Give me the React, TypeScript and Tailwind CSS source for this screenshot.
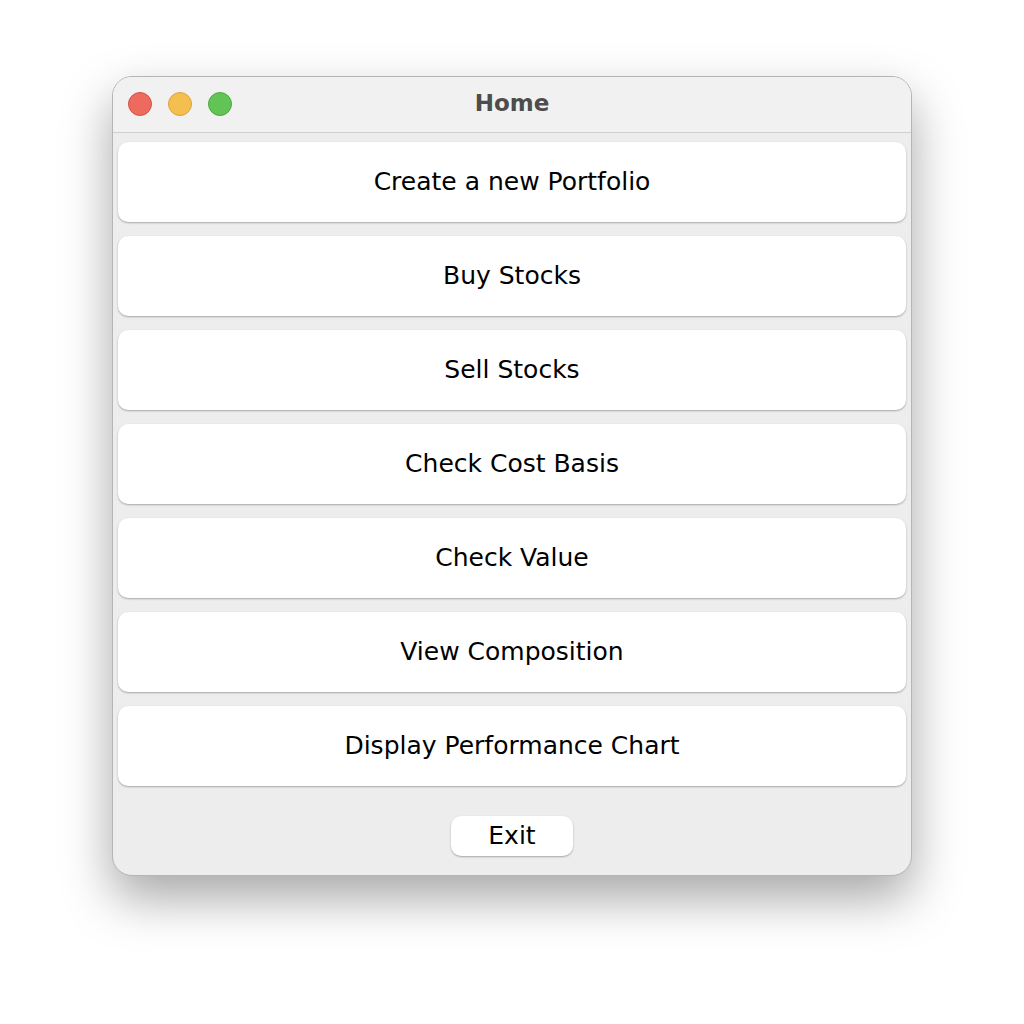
import React from 'react';

const items = [
  'Create a new Portfolio',
  'Buy Stocks',
  'Sell Stocks',
  'Check Cost Basis',
  'Check Value',
  'View Composition',
  'Display Performance Chart',
];

export default function App() {
  return (
    <div className="w-[1024px] h-[1024px] bg-white flex justify-center pt-[76px]" style={{ fontFamily: '"DejaVu Sans", "Noto Sans", sans-serif' }}>
      <div className="w-[800px] h-[800px] rounded-[20px] overflow-hidden bg-[#ededed] border border-[#b5b5b5] shadow-[0_22px_50px_rgba(0,0,0,0.35)] flex flex-col">
        <div className="relative h-[56px] bg-[#f1f1f1] border-b border-[#d0d0d0] flex items-center justify-center shrink-0">
          <div className="absolute left-[15px] top-[15px] flex gap-[16px]">
            <span className="w-[24px] h-[24px] rounded-full bg-[#ee6a5f] border border-[#d25347]" />
            <span className="w-[24px] h-[24px] rounded-full bg-[#f5bf4f] border border-[#d9a33a]" />
            <span className="w-[24px] h-[24px] rounded-full bg-[#61c454] border border-[#4ea73f]" />
          </div>
          <span className="text-[23px] leading-none font-bold text-[#4d4d4d] -mt-[3px]">Home</span>
        </div>
        <div className="flex flex-col gap-[14px] px-[5px] pt-[9px]">
          {items.map((t) => (
            <button key={t} className="h-[80px] w-full rounded-[10px] bg-white shadow-[0_1px_2px_rgba(0,0,0,0.3)] text-[25px] leading-none text-black flex items-center justify-center pb-[1px]">
              {t}
            </button>
          ))}
        </div>
        <div className="flex justify-center pt-[30px]">
          <button className="w-[122px] h-[40px] rounded-[10px] bg-white shadow-[0_1px_2px_rgba(0,0,0,0.3)] text-[25px] leading-none text-black flex items-center justify-center pb-[1px]">
            Exit
          </button>
        </div>
      </div>
    </div>
  );
}
